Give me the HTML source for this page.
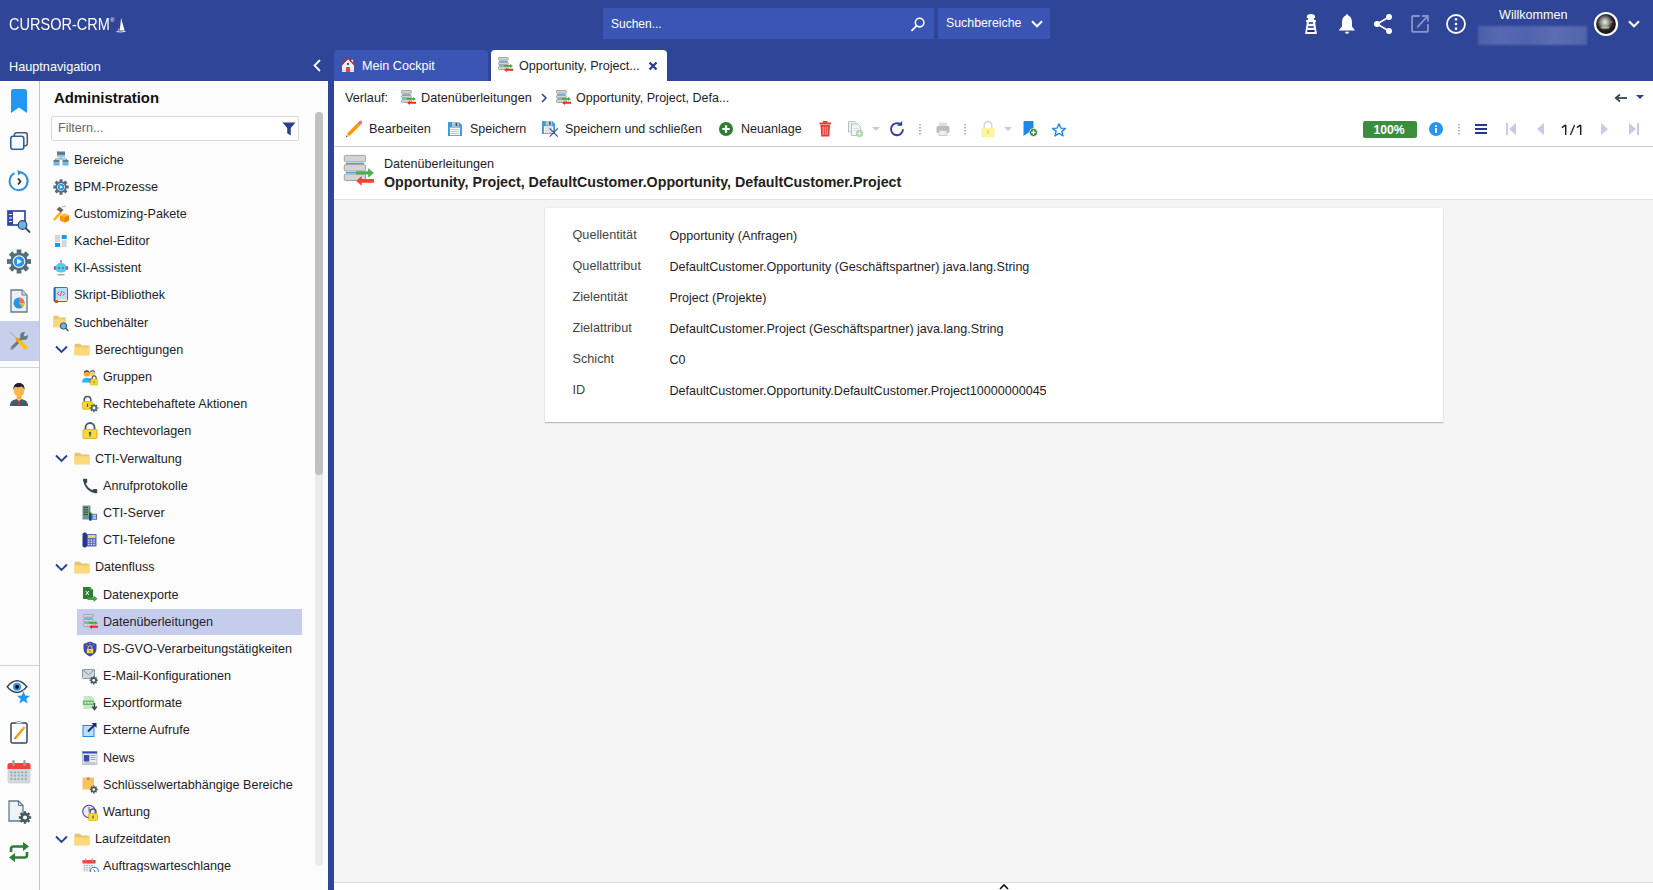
<!DOCTYPE html>
<html><head><meta charset="utf-8"><title>CURSOR-CRM</title>
<style>
*{box-sizing:border-box;margin:0;padding:0}
html,body{width:1653px;height:890px;overflow:hidden;background:#f5f5f5;font-family:"Liberation Sans",sans-serif}
.t{position:absolute;white-space:nowrap;line-height:normal}
.i{position:absolute;overflow:visible}
.r{position:absolute}
</style></head><body>
<div class="r" style="left:0px;top:0px;width:1653px;height:81px;background:#2f4698"></div>
<div class="t" style="left:9px;top:15.07px;font-size:16.5px;color:#fff;transform:scaleX(0.88);transform-origin:0 0">CURSOR-CRM</div>
<div class="t" style="left:110px;top:16.57px;font-size:6px;color:#fff">&reg;</div>
<svg class="i" style="left:116px;top:17px" width="10" height="16" viewBox="0 0 10 16"><path d="M5 0.5C5.8 4 7.5 9 8.5 13.5L3.5 13.5C4.5 9 4.8 4 5 0.5Z" fill="#fff"/><path d="M3.2 10C2.8 12 2.3 13 2 13.5L3 13.5Z" fill="#fff"/><path d="M0.5 14.6Q4.5 15.6 9.5 14.3" stroke="#fff" stroke-width="0.9" fill="none"/></svg>
<div class="r" style="left:603px;top:8px;width:331px;height:31px;background:#3a55b4"></div>
<div class="t" style="left:611px;top:17.14px;font-size:12.0px;color:#fff">Suchen...</div>
<svg class="i" style="left:911px;top:17px" width="14" height="14" viewBox="0 0 14 14"><circle cx="8.6" cy="5.6" r="4.3" stroke="#fff" stroke-width="1.6" fill="none"/><path d="M5.5 8.8L1 13.3" stroke="#fff" stroke-width="1.8" stroke-linecap="round"/></svg>
<div class="r" style="left:938px;top:8px;width:112px;height:31px;background:#3a55b4"></div>
<div class="t" style="left:946px;top:16.42px;font-size:12.35px;color:#fff">Suchbereiche</div>
<svg class="i" style="left:1031px;top:19.8px" width="12" height="8" viewBox="0 0 12 8"><path d="M1 1.2L6 6.3L11 1.2" stroke="#fff" stroke-width="2" fill="none"/></svg>
<svg class="i" style="left:1301px;top:11px" width="20" height="26" viewBox="0 0 20 26"><path d="M5.8 5.8Q5.8 3 10 2.9Q14.1 3 14.1 5.8V6.9H13.1V9H14.9V11H14.1L15.9 23H4.1L5.9 11H5.1V9H6.9V6.9H5.8Z" fill="#fff"/><path d="M7.8 11.2H12V12.8H7.6ZM7 15.2H12.8V16.8H6.9ZM6.3 19.1H13.6V20.9H6.2Z" fill="#1f2f85"/></svg>
<svg class="i" style="left:1339px;top:14px" width="16" height="20" viewBox="0 0 16 20"><path d="M8 0.3C8.8 0.3 9.2 1 9.2 1.6C11.8 2.4 13 5 13 8.5V12.5L16 16.5H0V16L3 12.5V8.5C3 5 4.2 2.4 6.8 1.6C6.8 1 7.2 0.3 8 0.3Z" fill="#fff"/><path d="M6 17.7H10C10 19 9 19.8 8 19.8C7 19.8 6 19 6 17.7Z" fill="#fff"/></svg>
<svg class="i" style="left:1374px;top:14px" width="18" height="20" viewBox="0 0 18 20"><circle cx="15" cy="3" r="3" fill="#fff"/><circle cx="3" cy="10" r="3" fill="#fff"/><circle cx="15" cy="17" r="3" fill="#fff"/><path d="M15 3L3 10L15 17" stroke="#fff" stroke-width="1.6" fill="none"/></svg>
<svg class="i" style="left:1410px;top:14px" width="20" height="20" viewBox="0 0 20 20"><path d="M9.8 2H2.9Q2.1 2 2.1 2.8V17Q2.1 17.8 2.9 17.8H17.1Q17.9 17.8 17.9 17V9.9" stroke="#8794cc" stroke-width="1.8" fill="none"/><path d="M12 2H17.9V7.6M7.2 13.3L17.5 2.4" stroke="#8794cc" stroke-width="1.8" fill="none"/></svg>
<svg class="i" style="left:1446px;top:14px" width="20" height="20" viewBox="0 0 20 20"><circle cx="10" cy="10" r="9" stroke="#fff" stroke-width="1.8" fill="none"/><circle cx="10" cy="5.3" r="1.35" fill="#fff"/><circle cx="10" cy="10" r="1.35" fill="#fff"/><circle cx="10" cy="14.7" r="1.35" fill="#fff"/></svg>
<div class="t" style="left:1499px;top:7.60px;font-size:12.6px;color:#fff">Willkommen</div>
<div class="r" style="left:1478px;top:26px;width:109px;height:19px;background:linear-gradient(90deg,#4b5fa9 0%,#5669b1 20%,#5064ad 45%,#5b6db3 70%,#5165ad 100%);filter:blur(0.8px)"></div>
<svg class="i" style="left:1594px;top:12px" width="24" height="24" viewBox="0 0 24 24"><defs><radialGradient id="av" cx="45%" cy="42%" r="55%"><stop offset="0" stop-color="#e8efe6"/><stop offset="0.3" stop-color="#9aa59a"/><stop offset="0.65" stop-color="#2a2228"/><stop offset="1" stop-color="#120e12"/></radialGradient></defs><circle cx="12" cy="12" r="11" fill="url(#av)" stroke="#fff" stroke-width="2.2"/><ellipse cx="11" cy="15.5" rx="4.5" ry="1.2" fill="#c8d890" opacity="0.7"/><ellipse cx="17" cy="10" rx="2" ry="1" fill="#c07090" opacity="0.6"/></svg>
<svg class="i" style="left:1628px;top:19.8px" width="12" height="8" viewBox="0 0 12 8"><path d="M1 1.2L6 6.3L11 1.2" stroke="#fff" stroke-width="2" fill="none"/></svg>
<div class="t" style="left:9px;top:59.51px;font-size:12.7px;color:#fff">Hauptnavigation</div>
<svg class="i" style="left:313px;top:59px" width="9" height="13" viewBox="0 0 9 13"><path d="M7 1L1.5 6.5L7 12" stroke="#fff" stroke-width="1.8" fill="none"/></svg>
<div class="r" style="left:334px;top:50px;width:154px;height:31px;background:#3a55b4;border-radius:4px 4px 0 0"></div>
<svg class="i" style="left:338px;top:55px" width="20" height="20" viewBox="0 0 20 20"><path d="M4 10L10 3.8L16 10V17H4Z" fill="#eef0f8"/><rect x="13.2" y="4.8" width="1.9" height="3.5" fill="#eef0f8"/><path d="M3.4 10L10 3.3L16.6 10" stroke="#c62828" stroke-width="1.4" fill="none"/><rect x="4" y="15" width="12" height="1" fill="#c5cae9"/><rect x="8" y="12" width="4" height="5" fill="#e64a19"/><rect x="9" y="8" width="1.9" height="1.9" fill="#0d47a1"/></svg>
<div class="t" style="left:362px;top:58.60px;font-size:12.6px;color:#fff">Mein Cockpit</div>
<div class="r" style="left:491px;top:50px;width:176px;height:31px;background:#fff;border-radius:4px 4px 0 0"></div>
<svg class="i" style="left:498px;top:57px" width="16" height="16" viewBox="0 0 16 16"><rect x="0.5" y="0.5" width="9.8" height="2.7" rx="0.7" fill="#d6d6d6" stroke="#a3a3a3" stroke-width="1"/>
<rect x="1" y="3.9" width="8.8" height="1.1" fill="#7cb0d6"/>
<rect x="0.5" y="5.5" width="9.8" height="2.2" rx="0.7" fill="#d6d6d6" stroke="#a3a3a3" stroke-width="1"/>
<rect x="1" y="8" width="5.5" height="1.1" fill="#7cb0d6"/>
<rect x="0.5" y="9.6" width="9.8" height="2.8" rx="0.7" fill="#d6d6d6" stroke="#a3a3a3" stroke-width="1"/>
<path d="M6 8.1H12V6.9L14.9 9L12 11.1V9.8H6Z" fill="#3cae3c"/>
<path d="M15 11.8H8.8V10.8L6.1 12.9L8.8 15V13.8H15Z" fill="#f0281e"/></svg>
<div class="t" style="left:519px;top:58.60px;font-size:12.6px;color:#1d1d2b">Opportunity, Project...</div>
<svg class="i" style="left:648px;top:60.5px" width="10" height="10" viewBox="0 0 10 10"><path d="M1.5 1.5L8.5 8.5M8.5 1.5L1.5 8.5" stroke="#2b3f8f" stroke-width="2.4"/></svg>
<div class="r" style="left:0px;top:81px;width:39px;height:809px;background:#fcfcfc"></div>
<div class="r" style="left:39px;top:81px;width:1px;height:809px;background:#c6c6c6"></div>
<svg class="i" style="left:11px;top:89px" width="16" height="24" viewBox="0 0 16 24"><path d="M2 0H14Q16 0 16 2.5V24L8 18.5L0 24V2.5Q0 0 2 0Z" fill="#2196f3"/></svg>
<svg class="i" style="left:10px;top:132px" width="18" height="18" viewBox="0 0 18 18"><rect x="4.3" y="0.8" width="13" height="13" rx="2.3" stroke="#555" stroke-width="1.5" fill="none"/><rect x="0.8" y="4.3" width="13" height="13" rx="2.3" stroke="#2a62a8" stroke-width="1.6" fill="#fcfcfc"/></svg>
<svg class="i" style="left:8px;top:170px" width="22" height="22" viewBox="0 0 22 22"><path d="M6.5 3.2A9 9 0 1 0 12 2.3" stroke="#2f8fd8" stroke-width="2" fill="none"/><path d="M9.5 0L14 2.3L10 5.5Z" fill="#2f8fd8"/><path d="M10 8.5L12.5 11.5L10 14.5" stroke="#222" stroke-width="1.6" fill="none"/></svg>
<svg class="i" style="left:7px;top:210px" width="24" height="23" viewBox="0 0 24 23"><rect x="1" y="1" width="17" height="14" stroke="#3546a6" stroke-width="1.7" fill="#fff"/><path d="M1 1H6V15H1Z" fill="#3546a6"/><path d="M2 4.5H5M2 8H5M2 11.5H5" stroke="#fff" stroke-width="1.2"/><circle cx="15.5" cy="15" r="4.3" fill="#64b5f6" stroke="#37474f" stroke-width="1.2"/><path d="M18.5 18L23 22.5" stroke="#37474f" stroke-width="1.8"/></svg>
<svg class="i" style="left:7px;top:249px" width="24" height="25" viewBox="0 0 24 25"><path d="M20.47 10.18L23.97 10.12L23.97 14.88L20.47 14.82L19.63 16.85L22.14 19.28L18.78 22.64L16.35 20.13L14.32 20.97L14.38 24.47L9.62 24.47L9.68 20.97L7.65 20.13L5.22 22.64L1.86 19.28L4.37 16.85L3.53 14.82L0.03 14.88L0.03 10.12L3.53 10.18L4.37 8.15L1.86 5.72L5.22 2.36L7.65 4.87L9.68 4.03L9.62 0.53L14.38 0.53L14.32 4.03L16.35 4.87L18.78 2.36L22.14 5.72L19.63 8.15Z" fill="#546e7a"/><circle cx="12" cy="12.5" r="8.52" fill="#546e7a"/><circle cx="12" cy="12.5" r="3.90" fill="#546e7a"/><circle cx="12" cy="12.5" r="6.3" fill="#fff"/><circle cx="12" cy="12.5" r="5.3" fill="#2196f3"/><path d="M10 9.5L15 12.5L10 15.5Z" fill="#fff"/></svg>
<svg class="i" style="left:10px;top:289px" width="18" height="24" viewBox="0 0 18 24"><path d="M1 1H12L17 6V23H1Z" fill="#eceff1" stroke="#607d8b" stroke-width="1.3"/><path d="M12 1V6H17" fill="#cfd8dc" stroke="#607d8b" stroke-width="1"/><circle cx="9" cy="14" r="5.5" fill="#2196f3"/><path d="M9 14V8.5A5.5 5.5 0 0 1 14.5 14Z" fill="#ff7043"/><path d="M9 14H14.5A5.5 5.5 0 0 1 12.5 18.3Z" fill="#ffc107"/></svg>
<div class="r" style="left:0px;top:321px;width:39px;height:40px;background:#c7cfec"></div>
<svg class="i" style="left:4px;top:326px" width="30" height="30" viewBox="0 0 30 30"><path d="M6.5 6.5L12.5 12.5" stroke="#b0bec5" stroke-width="1.5" stroke-linecap="round"/><path d="M7.8 22.2L16.8 13.2" stroke="#607d8b" stroke-width="3" stroke-linecap="round"/><circle cx="20" cy="10" r="3.9" fill="#607d8b"/><path d="M20.3 9.7L21.2 4.6L25.4 8.8Z" fill="#c7cfec"/><circle cx="21.3" cy="8.7" r="1.5" fill="#c7cfec"/><circle cx="7.8" cy="22.2" r="0.9" fill="#90a4ae"/><path d="M12.9 15.1L15.1 12.9L23.1 19.9Q24 21.8 22 23.3Q20.6 23.6 19.9 23.1Z" fill="#ffc107"/><path d="M12.3 12.3L14.6 14.6" stroke="#ff9800" stroke-width="3.2"/></svg>
<div class="r" style="left:0px;top:367px;width:39px;height:1px;background:#d4d4d4"></div>
<svg class="i" style="left:9px;top:382px" width="20" height="24" viewBox="0 0 20 24"><path d="M1 24C1 19 4 17 10 17C16 17 19 19 19 24Z" fill="#455a64"/><path d="M8 17L10 19.5L12 17Z" fill="#fff"/><path d="M9.3 18.5H10.7L11.2 23.5H8.8Z" fill="#d32f2f"/><rect x="7.8" y="13" width="4.4" height="4.5" fill="#ffa726"/><ellipse cx="10" cy="8.5" rx="5.3" ry="6.2" fill="#ffb74d"/><path d="M4.5 8.2C4 3.5 6.5 1 10 1C13.5 1 16 3.5 15.5 8.2C15 6 14 4.8 12.5 4.5C11 5.5 8 5.5 6 4.8C5.3 5.6 4.8 6.5 4.5 8.2Z" fill="#212121"/></svg>
<div class="r" style="left:0px;top:665px;width:39px;height:1px;background:#d4d4d4"></div>
<svg class="i" style="left:4px;top:676px" width="30" height="30" viewBox="0 0 30 30"><path d="M3.2 10.8Q13 -1.4 22.8 10.8Q13 22.2 3.2 10.8Z" fill="#fff" stroke="#37474f" stroke-width="1.4"/><circle cx="13" cy="10.8" r="4" fill="#2196f3"/><circle cx="13" cy="10.8" r="1.9" fill="#000"/><path d="M19.50 14.30L21.44 19.23L26.73 19.55L22.64 22.92L23.97 28.05L19.50 25.20L15.03 28.05L16.36 22.92L12.27 19.55L17.56 19.23Z" fill="#2196f3" stroke="#fcfcfc" stroke-width="0.6"/></svg>
<svg class="i" style="left:10px;top:720px" width="18" height="24" viewBox="0 0 18 24"><rect x="1" y="3" width="16" height="20" rx="1.6" fill="#fff" stroke="#37474f" stroke-width="1.5"/><path d="M6 3.5Q6 1.3 9 1.3Q12 1.3 12 3.5Z" fill="#fff" stroke="#90a4ae" stroke-width="1"/><path d="M5.2 18.3L13.3 8.6" stroke="#ff9800" stroke-width="2.4"/><path d="M13.3 8.6L14.6 7" stroke="#f48fb1" stroke-width="2.4"/><path d="M4.4 19.5L4.6 17.6L6 18.8Z" fill="#5d4037"/></svg>
<svg class="i" style="left:7px;top:760px" width="24" height="24" viewBox="0 0 24 24"><rect x="0.5" y="3" width="23" height="20.5" rx="2.5" fill="#cfd8dc"/><path d="M0.5 5.5Q0.5 3 3 3H21Q23.5 3 23.5 5.5V9H0.5Z" fill="#f44336"/><rect x="5.3" y="0" width="2.4" height="6" rx="1.2" fill="#90a4ae"/><rect x="16.3" y="0" width="2.4" height="6" rx="1.2" fill="#90a4ae"/><rect x="3.5" y="11.5" width="1.8" height="1.7" fill="#90a4ae"/><rect x="7.1" y="11.5" width="1.8" height="1.7" fill="#90a4ae"/><rect x="10.7" y="11.5" width="1.8" height="1.7" fill="#90a4ae"/><rect x="14.3" y="11.5" width="1.8" height="1.7" fill="#90a4ae"/><rect x="17.9" y="11.5" width="1.8" height="1.7" fill="#90a4ae"/><rect x="3.5" y="14.8" width="1.8" height="1.7" fill="#90a4ae"/><rect x="7.1" y="14.8" width="1.8" height="1.7" fill="#90a4ae"/><rect x="10.7" y="14.8" width="1.8" height="1.7" fill="#90a4ae"/><rect x="14.3" y="14.8" width="1.8" height="1.7" fill="#90a4ae"/><rect x="17.9" y="14.8" width="1.8" height="1.7" fill="#90a4ae"/><rect x="3.5" y="18.1" width="1.8" height="1.7" fill="#90a4ae"/><rect x="7.1" y="18.1" width="1.8" height="1.7" fill="#90a4ae"/><rect x="10.7" y="18.1" width="1.8" height="1.7" fill="#90a4ae"/><rect x="14.3" y="18.1" width="1.8" height="1.7" fill="#90a4ae"/><rect x="17.9" y="18.1" width="1.8" height="1.7" fill="#90a4ae"/></svg>
<svg class="i" style="left:8px;top:800px" width="24" height="24" viewBox="0 0 24 24"><path d="M1 1H10.5L15 5.5V21H1Z" fill="#eef1f6" stroke="#607d8b" stroke-width="1.3"/><path d="M10.5 1V5.5H15" fill="none" stroke="#546e7a" stroke-width="1"/><path d="M21.38 16.30L23.18 16.27L23.18 18.73L21.38 18.70L20.94 19.75L22.24 21.00L20.50 22.74L19.25 21.44L18.20 21.88L18.23 23.68L15.77 23.68L15.80 21.88L14.75 21.44L13.50 22.74L11.76 21.00L13.06 19.75L12.62 18.70L10.82 18.73L10.82 16.27L12.62 16.30L13.06 15.25L11.76 14.00L13.50 12.26L14.75 13.56L15.80 13.12L15.77 11.32L18.23 11.32L18.20 13.12L19.25 13.56L20.50 12.26L22.24 14.00L20.94 15.25Z" fill="#455a64"/><circle cx="17" cy="17.5" r="4.40" fill="#455a64"/><circle cx="17" cy="17.5" r="2.02" fill="#fff"/></svg>
<svg class="i" style="left:9px;top:842px" width="20" height="20" viewBox="0 0 20 20"><path d="M2 10V7Q2 4.5 4.5 4.5H15" stroke="#2e7d32" stroke-width="2.6" fill="none"/><path d="M14 0L20 4.5L14 9Z" fill="#2e7d32"/><path d="M18 10V13Q18 15.5 15.5 15.5H5" stroke="#2e7d32" stroke-width="2.6" fill="none"/><path d="M6 11L0 15.5L6 20Z" fill="#2e7d32"/></svg>
<div class="r" style="left:40px;top:81px;width:288px;height:809px;background:#fcfcfc"></div>
<div class="t" style="left:54px;top:89.52px;font-size:14.9px;color:#111;font-weight:700">Administration</div>
<div class="r" style="left:51px;top:116px;width:248px;height:25px;background:#fff;border:1px solid #d9d9d9;border-radius:2px"></div>
<div class="t" style="left:58px;top:121.10px;font-size:12.6px;color:#666">Filtern...</div>
<svg class="i" style="left:282px;top:122px" width="14" height="14" viewBox="0 0 14 14"><path d="M0.5 0.5H13.5L8.8 6V13.5L5.2 11.3V6Z" fill="#2b3f8f"/></svg>
<div class="r" style="left:315px;top:112px;width:8px;height:754px;background:#ebebeb;border-radius:4px"></div>
<div class="r" style="left:315px;top:112px;width:8px;height:363px;background:#c1c1c1;border-radius:4px"></div>
<div class="r" style="left:328px;top:81px;width:6px;height:809px;background:#2f4698"></div>
<div style="position:absolute;left:40px;top:146px;width:274px;height:726px;overflow:hidden">
<svg class="i" style="left:13px;top:5.4px" width="16" height="16" viewBox="0 0 16 16"><rect x="4" y="0.5" width="8" height="3.5" fill="#607d8b"/><rect x="4" y="4" width="8" height="2.5" fill="#90caf9"/><path d="M8 6.5V8M2.5 9V8H13.5V9" stroke="#78909c" stroke-width="1" fill="none"/><rect x="0.5" y="9" width="6" height="2.5" fill="#607d8b"/><rect x="0.5" y="11.5" width="6" height="3" fill="#64b5f6"/><rect x="9.5" y="9" width="6" height="2.5" fill="#607d8b"/><rect x="9.5" y="11.5" width="6" height="3" fill="#64b5f6"/></svg>
<div class="t" style="left:34px;top:6.50px;font-size:12.6px;color:#1d1d2b">Bereiche</div>
<svg class="i" style="left:13px;top:32.59px" width="16" height="16" viewBox="0 0 16 16"><path d="M13.42 6.52L15.65 6.48L15.65 9.52L13.42 9.48L12.88 10.78L14.49 12.33L12.33 14.49L10.78 12.88L9.48 13.42L9.52 15.65L6.48 15.65L6.52 13.42L5.22 12.88L3.67 14.49L1.51 12.33L3.12 10.78L2.58 9.48L0.35 9.52L0.35 6.48L2.58 6.52L3.12 5.22L1.51 3.67L3.67 1.51L5.22 3.12L6.52 2.58L6.48 0.35L9.52 0.35L9.48 2.58L10.78 3.12L12.33 1.51L14.49 3.67L12.88 5.22Z" fill="#546e7a"/><circle cx="8" cy="8" r="5.45" fill="#546e7a"/><circle cx="8" cy="8" r="2.50" fill="#546e7a"/><circle cx="8" cy="8" r="3.8" fill="#fff"/><circle cx="8" cy="8" r="3.2" fill="#2196f3"/><path d="M6.9 6.3L10 8L6.9 9.7Z" fill="#fff"/></svg>
<div class="t" style="left:34px;top:33.69px;font-size:12.6px;color:#1d1d2b">BPM-Prozesse</div>
<svg class="i" style="left:13px;top:59.78px" width="16" height="16" viewBox="0 0 16 16"><path d="M1 14L8 6" stroke="#ffb300" stroke-width="2.4"/><path d="M3.5 3.5L6.5 0.8L10.5 4L8 6.5Z" fill="#616161"/><path d="M8.5 1L13 0" stroke="#9e9e9e" stroke-width="0.8"/><path d="M7 9.5L11.5 7.5L16 9.5V14.5L11.5 16.5L7 14.5Z" fill="#ff9800"/><path d="M7 9.5L11.5 11.5L16 9.5L11.5 7.5Z" fill="#ffb74d"/><path d="M11.5 11.5V16.5L16 14.5V9.5Z" fill="#f57c00"/></svg>
<div class="t" style="left:34px;top:60.88px;font-size:12.6px;color:#1d1d2b">Customizing-Pakete</div>
<svg class="i" style="left:13px;top:86.97px" width="16" height="16" viewBox="0 0 16 16"><rect x="2" y="2" width="5" height="7" fill="#cfd8dc"/><rect x="2" y="10" width="5" height="4" fill="#1e9be0"/><rect x="8.7" y="2" width="5" height="4" fill="#1e9be0"/><rect x="8.7" y="7" width="5" height="7" fill="#cfd8dc"/></svg>
<div class="t" style="left:34px;top:88.07px;font-size:12.6px;color:#1d1d2b">Kachel-Editor</div>
<svg class="i" style="left:13px;top:114.16px" width="16" height="16" viewBox="0 0 16 16"><rect x="7.3" y="0.2" width="1.4" height="2.5" fill="#8e44ad"/><path d="M2.5 8.5Q2.5 3 8 3Q13.5 3 13.5 8.5Q13.5 12.5 8 12.5Q2.5 12.5 2.5 8.5Z" fill="#4dd0e1"/><ellipse cx="2" cy="8" rx="1.3" ry="2" fill="#ab47bc"/><ellipse cx="14" cy="8" rx="1.3" ry="2" fill="#ab47bc"/><circle cx="6" cy="8" r="0.9" fill="#8e44ad"/><circle cx="10" cy="8" r="0.9" fill="#8e44ad"/><ellipse cx="8" cy="14.8" rx="4" ry="0.8" fill="#9e9e9e"/></svg>
<div class="t" style="left:34px;top:115.26px;font-size:12.6px;color:#1d1d2b">KI-Assistent</div>
<svg class="i" style="left:13px;top:141.35px" width="16" height="16" viewBox="0 0 16 16"><rect x="1" y="0.5" width="13.5" height="14" rx="1" fill="#bbdefb" stroke="#1565c0" stroke-width="0.9"/><rect x="1" y="0.5" width="1.6" height="14" fill="#1565c0"/><rect x="2.6" y="12.5" width="11.9" height="1.5" fill="#fff3c4"/><path d="M6 4.5L4.5 6.5L6 8.5M10 4.5L11.5 6.5L10 8.5M8.8 4L7.2 9" stroke="#d32f2f" stroke-width="0.8" fill="none"/><rect x="2" y="13" width="3" height="3" fill="#f44336"/></svg>
<div class="t" style="left:34px;top:142.45px;font-size:12.6px;color:#1d1d2b">Skript-Bibliothek</div>
<svg class="i" style="left:13px;top:168.54px" width="16" height="16" viewBox="0 0 16 16"><g transform="scale(0.82 1)"><path d="M0.5 2Q0.5 0.8 1.7 0.8H6L7.5 2.5H14.3Q15.5 2.5 15.5 3.7V11.8Q15.5 12.2 15 12.2H1Q0.5 12.2 0.5 11.8Z" fill="#e8c370"/><path d="M0.5 4.2H15.5V11.5Q15.5 12.2 14.8 12.2H1.2Q0.5 12.2 0.5 11.5Z" fill="#fbd87a"/></g><circle cx="10.5" cy="11" r="3.2" fill="#64b5f6" stroke="#37474f" stroke-width="0.9"/><path d="M12.8 13.3L15.5 16" stroke="#37474f" stroke-width="1.3"/></svg>
<div class="t" style="left:34px;top:169.64px;font-size:12.6px;color:#1d1d2b">Suchbeh&auml;lter</div>
<svg class="i" style="left:14.5px;top:199.43px" width="13" height="9" viewBox="0 0 13 9"><path d="M1 1.5L6.5 7L12 1.5" stroke="#2b3f8f" stroke-width="1.9" fill="none"/></svg>
<svg class="i" style="left:34px;top:197.23px" width="16" height="13" viewBox="0 0 16 13"><path d="M0.5 2Q0.5 0.8 1.7 0.8H6L7.5 2.5H14.3Q15.5 2.5 15.5 3.7V11.8Q15.5 12.2 15 12.2H1Q0.5 12.2 0.5 11.8Z" fill="#e8c370"/><path d="M0.5 4.2H15.5V11.5Q15.5 12.2 14.8 12.2H1.2Q0.5 12.2 0.5 11.5Z" fill="#fbd87a"/></svg>
<div class="t" style="left:55px;top:196.83px;font-size:12.6px;color:#1d1d2b">Berechtigungen</div>
<svg class="i" style="left:42px;top:222.92px" width="16" height="16" viewBox="0 0 16 16"><circle cx="10.5" cy="4.4" r="2.8" fill="#ffcc80"/><path d="M7.7 4Q7.7 1 10.5 1Q13.3 1 13.3 4Q12.5 2.5 10.5 2.5Q8.5 2.5 7.7 4Z" fill="#757575"/><circle cx="4.7" cy="4.7" r="2.9" fill="#ffa726"/><path d="M1.8 4.4Q1.8 1.2 4.7 1.2Q7.6 1.2 7.6 4.4Q6.8 2.8 4.7 2.8Q2.6 2.8 1.8 4.4Z" fill="#424242"/><path d="M0 13.5Q0 8.8 4.7 8.8Q8 8.8 9 10.3V13.5Z" fill="#29b6f6"/><path d="M7.5 13.5V9.6L9.5 8.9L9 13.5Z" fill="#e53935"/><path d="M10.3 10.3V8.8A1.9 1.9 0 0 1 14.1 8.8V10.3" stroke="#455a64" stroke-width="1.2" fill="none"/><rect x="8.6" y="10.3" width="7" height="5.7" rx="0.6" fill="#fdd835" stroke="#c9a100" stroke-width="0.5"/><rect x="11.7" y="12.2" width="0.9" height="2" fill="#455a64"/></svg>
<div class="t" style="left:63px;top:224.02px;font-size:12.6px;color:#1d1d2b">Gruppen</div>
<svg class="i" style="left:42px;top:250.11px" width="16" height="16" viewBox="0 0 16 16"><g transform="translate(0 0) scale(1.1)"><path d="M2 5V3.5A3 3 0 0 1 8 3.5V5" stroke="#455a64" stroke-width="1.4" fill="none"/><rect x="0.5" y="5" width="9" height="7" rx="1" fill="#fdd835" stroke="#c9a100" stroke-width="0.6"/><rect x="4.4" y="7" width="1.2" height="3" fill="#455a64"/></g><path d="M14.99 11.18L16.22 11.16L16.22 12.84L14.99 12.82L14.69 13.53L15.58 14.39L14.39 15.58L13.53 14.69L12.82 14.99L12.84 16.22L11.16 16.22L11.18 14.99L10.47 14.69L9.61 15.58L8.42 14.39L9.31 13.53L9.01 12.82L7.78 12.84L7.78 11.16L9.01 11.18L9.31 10.47L8.42 9.61L9.61 8.42L10.47 9.31L11.18 9.01L11.16 7.78L12.84 7.78L12.82 9.01L13.53 9.31L14.39 8.42L15.58 9.61L14.69 10.47Z" fill="#546e7a"/><circle cx="12" cy="12" r="3.00" fill="#546e7a"/><circle cx="12" cy="12" r="1.38" fill="#fff"/></svg>
<div class="t" style="left:63px;top:251.21px;font-size:12.6px;color:#1d1d2b">Rechtebehaftete Aktionen</div>
<svg class="i" style="left:42px;top:277.3px" width="16" height="16" viewBox="0 0 16 16"><path d="M3.5 6.5V4.5A4.5 4.5 0 0 1 12.5 4.5V6.5" stroke="#455a64" stroke-width="1.8" fill="none"/><rect x="1" y="6.5" width="14" height="9" rx="1.2" fill="#fdd835" stroke="#c9a100" stroke-width="0.7"/><circle cx="8" cy="10" r="1.3" fill="#455a64"/><rect x="7.3" y="10" width="1.4" height="3.5" fill="#455a64"/></svg>
<div class="t" style="left:63px;top:278.40px;font-size:12.6px;color:#1d1d2b">Rechtevorlagen</div>
<svg class="i" style="left:14.5px;top:308.19px" width="13" height="9" viewBox="0 0 13 9"><path d="M1 1.5L6.5 7L12 1.5" stroke="#2b3f8f" stroke-width="1.9" fill="none"/></svg>
<svg class="i" style="left:34px;top:305.99px" width="16" height="13" viewBox="0 0 16 13"><path d="M0.5 2Q0.5 0.8 1.7 0.8H6L7.5 2.5H14.3Q15.5 2.5 15.5 3.7V11.8Q15.5 12.2 15 12.2H1Q0.5 12.2 0.5 11.8Z" fill="#e8c370"/><path d="M0.5 4.2H15.5V11.5Q15.5 12.2 14.8 12.2H1.2Q0.5 12.2 0.5 11.5Z" fill="#fbd87a"/></svg>
<div class="t" style="left:55px;top:305.59px;font-size:12.6px;color:#1d1d2b">CTI-Verwaltung</div>
<svg class="i" style="left:42px;top:331.68px" width="16" height="16" viewBox="0 0 16 16"><path d="M1 1.5Q1 0.8 1.8 0.8H4.5Q5.2 0.8 5.2 1.5V4.2Q5.2 5 4.3 5.2H3.6Q5.5 10 10.8 12.3V11.8Q11 11 11.8 11H14.5Q15.2 11 15.2 11.8V14.5Q15.2 15.2 14.5 15.2H13Q3 13 1 2.5Z" fill="#37474f"/></svg>
<div class="t" style="left:63px;top:332.78px;font-size:12.6px;color:#1d1d2b">Anrufprotokolle</div>
<svg class="i" style="left:42px;top:358.87px" width="16" height="16" viewBox="0 0 16 16"><rect x="0.5" y="0.5" width="8" height="14" fill="#78909c"/><rect x="1.5" y="2.0" width="6" height="1" fill="#37474f"/><rect x="6" y="2.0" width="1" height="1" fill="#76ff03"/><rect x="1.5" y="4.3" width="6" height="1" fill="#37474f"/><rect x="6" y="4.3" width="1" height="1" fill="#76ff03"/><rect x="1.5" y="6.6" width="6" height="1" fill="#37474f"/><rect x="6" y="6.6" width="1" height="1" fill="#76ff03"/><rect x="1.5" y="8.9" width="6" height="1" fill="#37474f"/><rect x="6" y="8.9" width="1" height="1" fill="#76ff03"/><rect x="7" y="7.5" width="2.8" height="8.3" rx="1.2" fill="#283593"/><rect x="9.8" y="8.8" width="5.2" height="6" fill="#5c6bc0"/><rect x="10.8" y="9.7" width="3.2" height="1.2" fill="#ffeb3b"/><rect x="10.8" y="11.3" width="3.2" height="2.7" fill="#90caf9"/></svg>
<div class="t" style="left:63px;top:359.97px;font-size:12.6px;color:#1d1d2b">CTI-Server</div>
<svg class="i" style="left:42px;top:386.06px" width="16" height="16" viewBox="0 0 16 16"><rect x="0.5" y="0.5" width="4.5" height="15" rx="2" fill="#283593"/><rect x="5" y="2" width="9.5" height="12.5" fill="#5c6bc0"/><rect x="6" y="3" width="7.5" height="3" fill="#d4e157"/><rect x="6.2" y="7.5" width="1.3" height="1.2" fill="#e3f2fd"/><rect x="8.8" y="7.5" width="1.3" height="1.2" fill="#e3f2fd"/><rect x="11.4" y="7.5" width="1.3" height="1.2" fill="#e3f2fd"/><rect x="6.2" y="9.7" width="1.3" height="1.2" fill="#e3f2fd"/><rect x="8.8" y="9.7" width="1.3" height="1.2" fill="#e3f2fd"/><rect x="11.4" y="9.7" width="1.3" height="1.2" fill="#e3f2fd"/><rect x="6.2" y="11.9" width="1.3" height="1.2" fill="#e3f2fd"/><rect x="8.8" y="11.9" width="1.3" height="1.2" fill="#e3f2fd"/><rect x="11.4" y="11.9" width="1.3" height="1.2" fill="#e3f2fd"/></svg>
<div class="t" style="left:63px;top:387.16px;font-size:12.6px;color:#1d1d2b">CTI-Telefone</div>
<svg class="i" style="left:14.5px;top:416.95px" width="13" height="9" viewBox="0 0 13 9"><path d="M1 1.5L6.5 7L12 1.5" stroke="#2b3f8f" stroke-width="1.9" fill="none"/></svg>
<svg class="i" style="left:34px;top:414.75px" width="16" height="13" viewBox="0 0 16 13"><path d="M0.5 2Q0.5 0.8 1.7 0.8H6L7.5 2.5H14.3Q15.5 2.5 15.5 3.7V11.8Q15.5 12.2 15 12.2H1Q0.5 12.2 0.5 11.8Z" fill="#e8c370"/><path d="M0.5 4.2H15.5V11.5Q15.5 12.2 14.8 12.2H1.2Q0.5 12.2 0.5 11.5Z" fill="#fbd87a"/></svg>
<div class="t" style="left:55px;top:414.35px;font-size:12.6px;color:#1d1d2b">Datenfluss</div>
<svg class="i" style="left:42px;top:440.44px" width="16" height="16" viewBox="0 0 16 16"><path d="M1 1H8.5L11 3.5V13H1Z" fill="#2e7d32"/><path d="M8.5 1V3.5H11Z" fill="#a5d6a7"/><path d="M3.8 5L6.8 9M6.8 5L3.8 9" stroke="#fff" stroke-width="1"/><path d="M5.5 11.5H11.5V9.5L15.5 12.8L11.5 16V14H5.5Z" fill="#43a047"/></svg>
<div class="t" style="left:63px;top:441.54px;font-size:12.6px;color:#1d1d2b">Datenexporte</div>
<div class="r" style="left:37px;top:462.9px;width:225px;height:25.9px;background:#c6cdec"></div>
<svg class="i" style="left:43px;top:468px" width="16" height="16" viewBox="0 0 16 16"><rect x="0.5" y="0.5" width="9.8" height="2.7" rx="0.7" fill="#d6d6d6" stroke="#a3a3a3" stroke-width="1"/>
<rect x="1" y="3.9" width="8.8" height="1.1" fill="#7cb0d6"/>
<rect x="0.5" y="5.5" width="9.8" height="2.2" rx="0.7" fill="#d6d6d6" stroke="#a3a3a3" stroke-width="1"/>
<rect x="1" y="8" width="5.5" height="1.1" fill="#7cb0d6"/>
<rect x="0.5" y="9.6" width="9.8" height="2.8" rx="0.7" fill="#d6d6d6" stroke="#a3a3a3" stroke-width="1"/>
<path d="M6 8.1H12V6.9L14.9 9L12 11.1V9.8H6Z" fill="#3cae3c"/>
<path d="M15 11.8H8.8V10.8L6.1 12.9L8.8 15V13.8H15Z" fill="#f0281e"/></svg>
<div class="t" style="left:63px;top:468.73px;font-size:12.6px;color:#1d1d2b">Daten&uuml;berleitungen</div>
<svg class="i" style="left:42px;top:494.82px" width="16" height="16" viewBox="0 0 16 16"><path d="M8 0.5L14.5 3V8Q14.5 13 8 15.5Q1.5 13 1.5 8V3Z" fill="#3949ab"/><circle cx="8" cy="2.5" r="0.6" fill="#ffeb3b"/><circle cx="4.8" cy="4" r="0.6" fill="#ffeb3b"/><circle cx="11.2" cy="4" r="0.6" fill="#ffeb3b"/><path d="M6 8V6.8A2 2 0 0 1 10 6.8V8" stroke="#ffeb3b" stroke-width="0.9" fill="none"/><rect x="4.8" y="8" width="6.4" height="4.3" fill="#fdd835"/><rect x="7.6" y="9.3" width="0.8" height="1.8" fill="#455a64"/></svg>
<div class="t" style="left:63px;top:495.92px;font-size:12.6px;color:#1d1d2b">DS-GVO-Verarbeitungst&auml;tigkeiten</div>
<svg class="i" style="left:42px;top:522.01px" width="16" height="16" viewBox="0 0 16 16"><rect x="0.5" y="1.5" width="12" height="9" rx="0.8" fill="#cfd8dc" stroke="#78909c" stroke-width="0.9"/><path d="M0.8 2L6.5 6.8L12.2 2" stroke="#78909c" stroke-width="0.9" fill="none"/><path d="M14.62 11.50L15.82 11.48L15.82 13.12L14.62 13.10L14.33 13.80L15.19 14.63L14.03 15.79L13.20 14.93L12.50 15.22L12.52 16.42L10.88 16.42L10.90 15.22L10.20 14.93L9.37 15.79L8.21 14.63L9.07 13.80L8.78 13.10L7.58 13.12L7.58 11.48L8.78 11.50L9.07 10.80L8.21 9.97L9.37 8.81L10.20 9.67L10.90 9.38L10.88 8.18L12.52 8.18L12.50 9.38L13.20 9.67L14.03 8.81L15.19 9.97L14.33 10.80Z" fill="#455a64"/><circle cx="11.7" cy="12.3" r="2.93" fill="#455a64"/><circle cx="11.7" cy="12.3" r="1.34" fill="#fff"/></svg>
<div class="t" style="left:63px;top:523.11px;font-size:12.6px;color:#1d1d2b">E-Mail-Konfigurationen</div>
<svg class="i" style="left:42px;top:549.2px" width="16" height="16" viewBox="0 0 16 16"><path d="M1.5 1H9.5L12.5 4V14H1.5Z" fill="#c8e6c9"/><rect x="0.8" y="5.5" width="11" height="4.5" fill="#66bb6a"/><rect x="2.5" y="7" width="2" height="1.5" fill="#e8f5e9"/><rect x="5.5" y="7" width="2" height="1.5" fill="#e8f5e9"/><rect x="8.5" y="7" width="2" height="1.5" fill="#e8f5e9"/><path d="M12.5 8V13M10.3 11.5L12.5 14.5L14.7 11.5" stroke="#37474f" stroke-width="1.4" fill="none"/></svg>
<div class="t" style="left:63px;top:550.30px;font-size:12.6px;color:#1d1d2b">Exportformate</div>
<svg class="i" style="left:42px;top:576.39px" width="16" height="16" viewBox="0 0 16 16"><rect x="1" y="3.5" width="11" height="11" fill="#bbdefb" stroke="#1e88e5" stroke-width="1"/><path d="M6 9.5L13.5 2" stroke="#1a237e" stroke-width="1.8"/><path d="M9.5 1H14.5V6Z" fill="#1a237e"/></svg>
<div class="t" style="left:63px;top:577.49px;font-size:12.6px;color:#1d1d2b">Externe Aufrufe</div>
<svg class="i" style="left:42px;top:603.58px" width="16" height="16" viewBox="0 0 16 16"><rect x="0.5" y="1.5" width="14.5" height="13" fill="#eceff1" stroke="#90a4ae" stroke-width="0.6"/><rect x="0.5" y="1.5" width="14.5" height="2" fill="#3949ab"/><rect x="1.8" y="5" width="5.5" height="6.5" fill="#3949ab"/><path d="M8.5 5.5H13.5M8.5 7.5H13.5M8.5 9.5H13.5M1.8 13H13.5" stroke="#90a4ae" stroke-width="0.9"/></svg>
<div class="t" style="left:63px;top:604.68px;font-size:12.6px;color:#1d1d2b">News</div>
<svg class="i" style="left:42px;top:630.77px" width="16" height="16" viewBox="0 0 16 16"><rect x="0.5" y="0.5" width="11.5" height="12" rx="0.5" fill="#fbc15e"/><rect x="5" y="0.5" width="2.5" height="2.5" fill="#e57373"/><path d="M14.58 11.74L15.72 11.72L15.72 13.28L14.58 13.26L14.30 13.93L15.13 14.72L14.02 15.83L13.23 15.00L12.56 15.28L12.58 16.42L11.02 16.42L11.04 15.28L10.37 15.00L9.58 15.83L8.47 14.72L9.30 13.93L9.02 13.26L7.88 13.28L7.88 11.72L9.02 11.74L9.30 11.07L8.47 10.28L9.58 9.17L10.37 10.00L11.04 9.72L11.02 8.58L12.58 8.58L12.56 9.72L13.23 10.00L14.02 9.17L15.13 10.28L14.30 11.07Z" fill="#455a64"/><circle cx="11.8" cy="12.5" r="2.79" fill="#455a64"/><circle cx="11.8" cy="12.5" r="1.28" fill="#fff"/></svg>
<div class="t" style="left:63px;top:631.87px;font-size:12.6px;color:#1d1d2b">Schl&uuml;sselwertabh&auml;ngige Bereiche</div>
<svg class="i" style="left:42px;top:657.96px" width="16" height="16" viewBox="0 0 16 16"><circle cx="7" cy="7.5" r="6.3" fill="#e8eaf6" stroke="#5e35b1" stroke-width="1.1"/><path d="M7 3V7.5" stroke="#616161" stroke-width="1"/><g transform="translate(6 4.5) scale(1)"><path d="M2 5V3.5A3 3 0 0 1 8 3.5V5" stroke="#455a64" stroke-width="1.4" fill="none"/><rect x="0.5" y="5" width="9" height="7" rx="1" fill="#fdd835" stroke="#c9a100" stroke-width="0.6"/><rect x="4.4" y="7" width="1.2" height="3" fill="#455a64"/></g></svg>
<div class="t" style="left:63px;top:659.06px;font-size:12.6px;color:#1d1d2b">Wartung</div>
<svg class="i" style="left:14.5px;top:688.85px" width="13" height="9" viewBox="0 0 13 9"><path d="M1 1.5L6.5 7L12 1.5" stroke="#2b3f8f" stroke-width="1.9" fill="none"/></svg>
<svg class="i" style="left:34px;top:686.65px" width="16" height="13" viewBox="0 0 16 13"><path d="M0.5 2Q0.5 0.8 1.7 0.8H6L7.5 2.5H14.3Q15.5 2.5 15.5 3.7V11.8Q15.5 12.2 15 12.2H1Q0.5 12.2 0.5 11.8Z" fill="#e8c370"/><path d="M0.5 4.2H15.5V11.5Q15.5 12.2 14.8 12.2H1.2Q0.5 12.2 0.5 11.5Z" fill="#fbd87a"/></svg>
<div class="t" style="left:55px;top:686.25px;font-size:12.6px;color:#1d1d2b">Laufzeitdaten</div>
<svg class="i" style="left:42px;top:712.34px" width="16" height="16" viewBox="0 0 16 16"><rect x="0.5" y="2" width="13" height="12.5" rx="1" fill="#eceff1"/><rect x="0.5" y="2" width="13" height="3.5" fill="#f44336"/><rect x="3" y="0.5" width="1.3" height="3" fill="#90a4ae"/><rect x="9.7" y="0.5" width="1.3" height="3" fill="#90a4ae"/><rect x="2.0" y="7.0" width="1.2" height="1.1" fill="#90a4ae"/><rect x="4.5" y="7.0" width="1.2" height="1.1" fill="#90a4ae"/><rect x="7.0" y="7.0" width="1.2" height="1.1" fill="#90a4ae"/><rect x="9.5" y="7.0" width="1.2" height="1.1" fill="#90a4ae"/><rect x="2.0" y="9.2" width="1.2" height="1.1" fill="#90a4ae"/><rect x="4.5" y="9.2" width="1.2" height="1.1" fill="#90a4ae"/><rect x="7.0" y="9.2" width="1.2" height="1.1" fill="#90a4ae"/><rect x="9.5" y="9.2" width="1.2" height="1.1" fill="#90a4ae"/><rect x="2.0" y="11.4" width="1.2" height="1.1" fill="#90a4ae"/><rect x="4.5" y="11.4" width="1.2" height="1.1" fill="#90a4ae"/><rect x="7.0" y="11.4" width="1.2" height="1.1" fill="#90a4ae"/><rect x="9.5" y="11.4" width="1.2" height="1.1" fill="#90a4ae"/><circle cx="12.3" cy="13.3" r="4" fill="#fff" stroke="#1e88e5" stroke-width="1.1"/><path d="M11.5 11.5L13 13.2L11.5 15" stroke="#37474f" stroke-width="0.9" fill="none"/></svg>
<div class="t" style="left:63px;top:713.44px;font-size:12.6px;color:#1d1d2b">Auftragswarteschlange</div>
</div>
<div class="r" style="left:334px;top:81px;width:1319px;height:809px;background:#f5f5f5"></div>
<div class="r" style="left:334px;top:81px;width:1319px;height:65px;background:#fff"></div>
<div class="r" style="left:334px;top:146px;width:1319px;height:1px;background:#cfcfcf"></div>
<div class="r" style="left:334px;top:147px;width:1319px;height:52px;background:#fff"></div>
<div class="r" style="left:334px;top:199px;width:1319px;height:1px;background:#e3e3e3"></div>
<div class="t" style="left:345px;top:90.91px;font-size:12.7px;color:#1d1d2b">Verlauf:</div>
<svg class="i" style="left:401px;top:90px" width="16" height="16" viewBox="0 0 16 16"><rect x="0.5" y="0.5" width="9.8" height="2.7" rx="0.7" fill="#d6d6d6" stroke="#a3a3a3" stroke-width="1"/>
<rect x="1" y="3.9" width="8.8" height="1.1" fill="#7cb0d6"/>
<rect x="0.5" y="5.5" width="9.8" height="2.2" rx="0.7" fill="#d6d6d6" stroke="#a3a3a3" stroke-width="1"/>
<rect x="1" y="8" width="5.5" height="1.1" fill="#7cb0d6"/>
<rect x="0.5" y="9.6" width="9.8" height="2.8" rx="0.7" fill="#d6d6d6" stroke="#a3a3a3" stroke-width="1"/>
<path d="M6 8.1H12V6.9L14.9 9L12 11.1V9.8H6Z" fill="#3cae3c"/>
<path d="M15 11.8H8.8V10.8L6.1 12.9L8.8 15V13.8H15Z" fill="#f0281e"/></svg>
<div class="t" style="left:421px;top:90.91px;font-size:12.7px;color:#1d1d2b">Daten&uuml;berleitungen</div>
<svg class="i" style="left:541px;top:93px" width="6" height="10" viewBox="0 0 6 10"><path d="M1 1L5 5L1 9" stroke="#2b3f8f" stroke-width="1.5" fill="none"/></svg>
<svg class="i" style="left:556px;top:90px" width="16" height="16" viewBox="0 0 16 16"><rect x="0.5" y="0.5" width="9.8" height="2.7" rx="0.7" fill="#d6d6d6" stroke="#a3a3a3" stroke-width="1"/>
<rect x="1" y="3.9" width="8.8" height="1.1" fill="#7cb0d6"/>
<rect x="0.5" y="5.5" width="9.8" height="2.2" rx="0.7" fill="#d6d6d6" stroke="#a3a3a3" stroke-width="1"/>
<rect x="1" y="8" width="5.5" height="1.1" fill="#7cb0d6"/>
<rect x="0.5" y="9.6" width="9.8" height="2.8" rx="0.7" fill="#d6d6d6" stroke="#a3a3a3" stroke-width="1"/>
<path d="M6 8.1H12V6.9L14.9 9L12 11.1V9.8H6Z" fill="#3cae3c"/>
<path d="M15 11.8H8.8V10.8L6.1 12.9L8.8 15V13.8H15Z" fill="#f0281e"/></svg>
<div class="t" style="left:576px;top:91.09px;font-size:12.5px;color:#1d1d2b">Opportunity, Project, Defa...</div>
<svg class="i" style="left:1615px;top:94px" width="12" height="8" viewBox="0 0 12 8"><path d="M5 0.5L0.8 4L5 7.5" stroke="#37474f" stroke-width="1.8" fill="none"/><path d="M1 4H12" stroke="#37474f" stroke-width="1.8"/></svg>
<svg class="i" style="left:1636px;top:95px" width="8" height="4" viewBox="0 0 8 4"><path d="M0 0H8L4 4Z" fill="#2b3f8f"/></svg>
<svg class="i" style="left:342px;top:117px" width="24" height="24" viewBox="0 0 24 24"><path d="M6.3 17.7L16.2 7.8" stroke="#ff9800" stroke-width="3.4"/><path d="M16.2 7.8L17.4 6.6" stroke="#b0bec5" stroke-width="3.4"/><path d="M17.4 6.6L18.6 5.4" stroke="#e57373" stroke-width="3.4" stroke-linecap="round"/><path d="M7.5 18.9L5.1 16.5L4.1 19.9Z" fill="#ffca28"/><path d="M4.1 19.9L4.5 18.5L5.5 19.5Z" fill="#212121"/></svg>
<div class="t" style="left:369px;top:121.42px;font-size:12.8px;color:#1d1d2b">Bearbeiten</div>
<svg class="i" style="left:448px;top:122px" width="14" height="14" viewBox="0 0 14 14"><path d="M0 0H11L14 3V14H0Z" fill="#3d9be0"/><rect x="4" y="0" width="7" height="4.8" fill="#b8c4cc"/><rect x="7.6" y="0.8" width="1.7" height="3.2" fill="#1e5a8a"/><rect x="2" y="5.6" width="10" height="7.6" fill="#fff"/><path d="M3 7.6H11M3 9.6H11M3 11.6H11" stroke="#b0bec5" stroke-width="0.9"/></svg>
<div class="t" style="left:470px;top:121.69px;font-size:12.5px;color:#1d1d2b">Speichern</div>
<svg class="i" style="left:542px;top:121px" width="16" height="16" viewBox="0 0 16 16"><path d="M0 0H10.2L13 2.8V13H0Z" fill="#3d9be0"/><rect x="3.7" y="0" width="6.5" height="4.4" fill="#b8c4cc"/><rect x="7" y="0.7" width="1.6" height="3" fill="#1e5a8a"/><rect x="1.9" y="5.2" width="9.2" height="7" fill="#fff"/><path d="M2.8 7H10M2.8 9H10M2.8 11H10" stroke="#b0bec5" stroke-width="0.9"/><path d="M7.6 7.4L15.8 15.6M15.8 7.4L7.6 15.6" stroke="#3f51b5" stroke-width="1.3"/></svg>
<div class="t" style="left:565px;top:121.73px;font-size:12.45px;color:#1d1d2b">Speichern und schlie&szlig;en</div>
<svg class="i" style="left:719px;top:122px" width="14" height="14" viewBox="0 0 14 14"><circle cx="7" cy="7" r="7" fill="#2e7d32"/><path d="M7 3.3V10.7M3.3 7H10.7" stroke="#fff" stroke-width="2.2"/></svg>
<div class="t" style="left:741px;top:121.64px;font-size:12.55px;color:#1d1d2b">Neuanlage</div>
<svg class="i" style="left:819px;top:121px" width="12" height="16" viewBox="0 0 12 16"><rect x="0.5" y="1.5" width="11.5" height="2" rx="0.5" fill="#e53935"/><rect x="4" y="0" width="4.5" height="1.8" fill="#e53935"/><path d="M1.5 4H11L10.3 15.5H2.2Z" fill="#e53935"/><path d="M4.2 5.5V14M6.25 5.5V14M8.3 5.5V14" stroke="#ffcdd2" stroke-width="0.8"/></svg>
<svg class="i" style="left:848px;top:121px" width="16" height="16" viewBox="0 0 16 16"><path d="M0.5 0.5H7L9 2.5V11H0.5Z" fill="#eceff1" stroke="#b0bec5" stroke-width="0.9"/><path d="M3.5 3H10L12.5 5.5V14.5H3.5Z" fill="#f5f5f5" stroke="#b0bec5" stroke-width="0.9"/><path d="M5.5 7.5H10M5.5 9.5H10" stroke="#cfd8dc" stroke-width="0.8"/><circle cx="11.5" cy="12.5" r="3.5" fill="#a5d6a7"/><path d="M11.5 10.5V14.5M9.5 12.5H13.5" stroke="#fff" stroke-width="1.2"/></svg>
<svg class="i" style="left:872px;top:127px" width="8" height="4" viewBox="0 0 8 4"><path d="M0 0H8L4 4Z" fill="#c5cae9"/></svg>
<svg class="i" style="left:885px;top:117px" width="24" height="24" viewBox="0 0 24 24"><path d="M18 12.3A6 6 0 1 1 15.6 7.4" stroke="#2c3e9e" stroke-width="1.9" fill="none"/><path d="M12 8.7H17.1V3.9Z" fill="#2c3e9e"/></svg>
<svg class="i" style="left:919px;top:124px" width="2" height="11" viewBox="0 0 2 11"><path d="M1 0V11" stroke="#7986cb" stroke-width="1.2" stroke-dasharray="1.5 1.5"/></svg>
<svg class="i" style="left:936px;top:122px" width="14" height="14" viewBox="0 0 14 14"><rect x="3" y="0.5" width="8" height="4" fill="#e0e0e0"/><rect x="0.5" y="4" width="13" height="7" rx="1.5" fill="#bdbdbd"/><rect x="3" y="8.5" width="8" height="5" fill="#eeeeee" stroke="#bdbdbd" stroke-width="0.7"/></svg>
<svg class="i" style="left:964px;top:124px" width="2" height="11" viewBox="0 0 2 11"><path d="M1 0V11" stroke="#7986cb" stroke-width="1.2" stroke-dasharray="1.5 1.5"/></svg>
<svg class="i" style="left:981px;top:121px" width="14" height="16" viewBox="0 0 14 16"><path d="M3.3 7V4.3A3.7 3.7 0 0 1 10.7 4.3V7" stroke="#cfd8dc" stroke-width="1.6" fill="none"/><rect x="0.5" y="7" width="13" height="9" rx="1" fill="#fff59d"/><rect x="6.3" y="9" width="1.4" height="4" fill="#e0d48a"/></svg>
<svg class="i" style="left:1004px;top:127px" width="8" height="4" viewBox="0 0 8 4"><path d="M0 0H8L4 4Z" fill="#c5cae9"/></svg>
<svg class="i" style="left:1023px;top:121px" width="15" height="16" viewBox="0 0 15 16"><path d="M1.5 0H9.5Q10.5 0 10.5 1V15L5.5 11.5L0.5 15V1Q0.5 0 1.5 0Z" fill="#1e88e5"/><circle cx="10.5" cy="11.5" r="4" fill="#2e7d32" stroke="#fff" stroke-width="0.8"/><path d="M10.5 9.3V13.7M8.3 11.5H12.7" stroke="#fff" stroke-width="1.4"/></svg>
<svg class="i" style="left:1052px;top:123px" width="14" height="14" viewBox="0 0 14 14"><path d="M7 0.8L8.8 5.1L13.4 5.4L9.9 8.4L11 12.9L7 10.4L3 12.9L4.1 8.4L0.6 5.4L5.2 5.1Z" fill="none" stroke="#1e88e5" stroke-width="1.4" stroke-linejoin="round"/></svg>
<div class="r" style="left:1363px;top:121px;width:54px;height:17px;background:#3a8e3e;border-radius:2px"></div>
<div class="t" style="left:1373.5px;top:122.96px;font-size:12.2px;color:#fff;font-weight:700">100%</div>
<svg class="i" style="left:1429px;top:122px" width="14" height="14" viewBox="0 0 14 14"><circle cx="7" cy="7" r="7" fill="#2196f3"/><circle cx="7" cy="4" r="1.1" fill="#fff"/><rect x="6" y="6" width="2" height="5" fill="#fff"/></svg>
<svg class="i" style="left:1458px;top:124px" width="2" height="11" viewBox="0 0 2 11"><path d="M1 0V11" stroke="#7986cb" stroke-width="1.2" stroke-dasharray="1.5 1.5"/></svg>
<svg class="i" style="left:1475px;top:124px" width="12" height="10" viewBox="0 0 12 10"><path d="M0 1H12M0 5H12M0 9H12" stroke="#283593" stroke-width="1.8"/></svg>
<svg class="i" style="left:1506px;top:123px" width="10" height="12" viewBox="0 0 10 12"><rect x="0" y="0" width="2" height="12" fill="#c5cae9"/><path d="M10 0V12L3 6Z" fill="#c5cae9"/></svg>
<svg class="i" style="left:1537px;top:123px" width="7" height="12" viewBox="0 0 7 12"><path d="M7 0V12L0 6Z" fill="#c5cae9"/></svg>
<svg class="i" style="left:1555px;top:118px" width="35" height="22" viewBox="0 0 35 22"><path d="M10.7 6.9V16.9M6.9 9.6L10.7 6.9M25.7 6.9V16.9M21.9 9.6L25.7 6.9" stroke="#1d1d2b" stroke-width="1.45" fill="none"/><path d="M15.4 16.9L19.6 6.9" stroke="#1d1d2b" stroke-width="1.3"/></svg>
<svg class="i" style="left:1601px;top:123px" width="7" height="12" viewBox="0 0 7 12"><path d="M0 0V12L7 6Z" fill="#c5cae9"/></svg>
<svg class="i" style="left:1629px;top:123px" width="10" height="12" viewBox="0 0 10 12"><path d="M0 0V12L7 6Z" fill="#c5cae9"/><rect x="8" y="0" width="2" height="12" fill="#c5cae9"/></svg>
<svg class="i" style="left:340px;top:150px" width="40" height="40" viewBox="0 0 40 40"><rect x="4.3" y="5.4" width="21.3" height="6.4" rx="1.3" fill="#d4d4d4" stroke="#9a9a9a" stroke-width="0.9"/>
<rect x="6" y="12.8" width="18" height="1.3" fill="#3aa3e3"/>
<rect x="4.3" y="14.6" width="21.3" height="6.4" rx="1.3" fill="#d4d4d4" stroke="#9a9a9a" stroke-width="0.9"/>
<rect x="6" y="22" width="10" height="1.3" fill="#3aa3e3"/>
<rect x="4.3" y="24" width="21.3" height="6.5" rx="1.3" fill="#d4d4d4" stroke="#9a9a9a" stroke-width="0.9"/>
<path d="M16 21.2H28.2V18.1L33.8 22.9L28.2 27.7V24.6H16Z" fill="#4caf50"/>
<path d="M34 29.1H21.7V26L16.2 30.9L21.7 35.8V32.7H34Z" fill="#f44336"/></svg>
<div class="t" style="left:384px;top:156.60px;font-size:12.6px;color:#1d1d2b">Daten&uuml;berleitungen</div>
<div class="t" style="left:384px;top:174.10px;font-size:14.25px;color:#222;font-weight:700">Opportunity, Project, DefaultCustomer.Opportunity, DefaultCustomer.Project</div>
<div class="r" style="left:545px;top:208px;width:898px;height:214px;background:#fff;box-shadow:0 1px 1px rgba(0,0,0,0.22),0 0 2px rgba(0,0,0,0.08)"></div>
<div class="t" style="left:572.5px;top:227.71px;font-size:12.7px;color:#444">Quellentit&auml;t</div>
<div class="t" style="left:669.5px;top:228.84px;font-size:12.55px;color:#1d1d2b">Opportunity (Anfragen)</div>
<div class="t" style="left:572.5px;top:258.71px;font-size:12.7px;color:#444">Quellattribut</div>
<div class="t" style="left:669.5px;top:259.84px;font-size:12.55px;color:#1d1d2b">DefaultCustomer.Opportunity (Gesch&auml;ftspartner) java.lang.String</div>
<div class="t" style="left:572.5px;top:289.71px;font-size:12.7px;color:#444">Zielentit&auml;t</div>
<div class="t" style="left:669.5px;top:290.84px;font-size:12.55px;color:#1d1d2b">Project (Projekte)</div>
<div class="t" style="left:572.5px;top:320.71px;font-size:12.7px;color:#444">Zielattribut</div>
<div class="t" style="left:669.5px;top:321.84px;font-size:12.55px;color:#1d1d2b">DefaultCustomer.Project (Gesch&auml;ftspartner) java.lang.String</div>
<div class="t" style="left:572.5px;top:351.71px;font-size:12.7px;color:#444">Schicht</div>
<div class="t" style="left:669.5px;top:352.84px;font-size:12.55px;color:#1d1d2b">C0</div>
<div class="t" style="left:572.5px;top:382.71px;font-size:12.7px;color:#444">ID</div>
<div class="t" style="left:669.5px;top:383.84px;font-size:12.55px;color:#1d1d2b">DefaultCustomer.Opportunity.DefaultCustomer.Project10000000045</div>
<div class="r" style="left:334px;top:882px;width:1319px;height:1px;background:#dcdcdc"></div>
<div class="r" style="left:334px;top:883px;width:1319px;height:7px;background:#fff"></div>
<svg class="i" style="left:999px;top:884.2px" width="10" height="6" viewBox="0 0 10 6"><path d="M1 5L5 1L9 5" stroke="#111" stroke-width="1.6" fill="none"/></svg>
</body></html>
